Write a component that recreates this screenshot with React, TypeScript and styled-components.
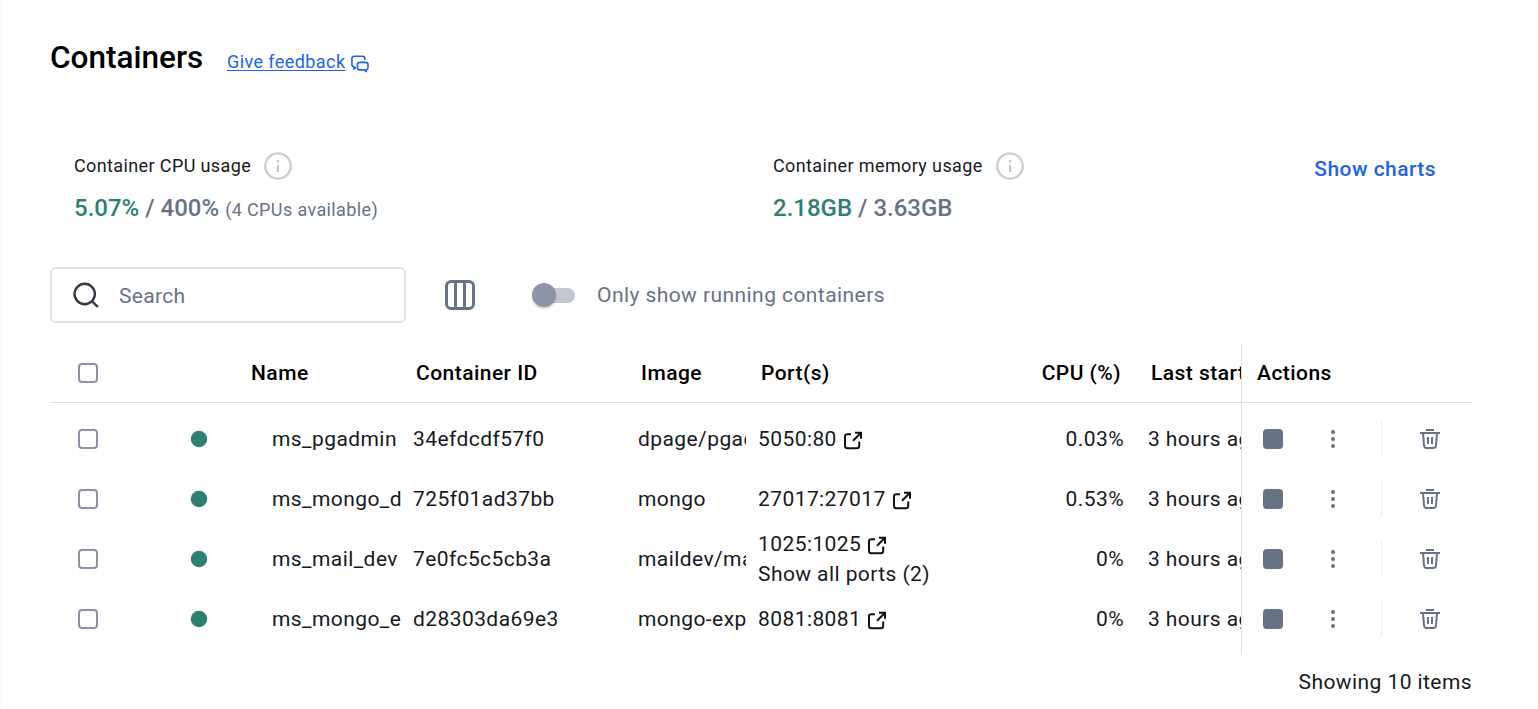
import React from "react";
import styled, { createGlobalStyle } from "styled-components";

const Global = createGlobalStyle`
  * { box-sizing: border-box; }
  body { margin: 0; background: #fff; font-family: Roboto, "Liberation Sans", sans-serif; color: #17191e; }
  svg { display: block; flex: none; }
`;

const Page = styled.main`
  height: 709px;
  border-left: 2px solid #f9f9fa;
  padding: 33px 66px 0 48px;
  overflow: hidden;
`;

const Header = styled.header`
  display: flex;
  align-items: center;
  height: 48px;
`;

const Title = styled.h1`
  margin: 0;
  padding-top: 2px;
  width: 177px;
  font-size: 31.5px;
  font-weight: 500;
  line-height: 48px;
  letter-spacing: 0;
  color: #000;
`;

const Feedback = styled.a`
  display: flex;
  align-items: center;
  gap: 6px;
  font-size: 18px;
  line-height: 27px;
  letter-spacing: 0.42px;
  color: #1d63ed;
  padding-top: 8px;

  span { text-decoration: underline; text-underline-offset: 2px; }
  svg { margin-top: 5px; }
`;

const Usage = styled.section`
  display: grid;
  grid-template-columns: 699px 1fr auto;
  margin-top: 70px;
  padding: 0 36px 0 24px;
  height: 116px;
`;

const UsageLabel = styled.div`
  display: flex;
  align-items: center;
  gap: 12px;
  height: 30px;
  font-size: 18px;
  letter-spacing: 0.38px;

  span { padding-bottom: 2px; }
`;

const UsageValue = styled.div`
  margin-top: 9px;
  font-size: 24px;
  font-weight: 500;
  line-height: 36px;
  letter-spacing: 0;
  color: #677285;
`;

const Used = styled.span`
  color: #2e7f74;
`;

const Note = styled.span`
  font-size: 18px;
  font-weight: 400;
  letter-spacing: 0.38px;
`;

const ChartsLink = styled.a`
  font-size: 21px;
  font-weight: 500;
  line-height: 36px;
  letter-spacing: 0.44px;
  color: #1d63ed;
`;

const Toolbar = styled.div`
  display: flex;
  align-items: center;
  height: 56px;
  color: #677285;
`;

const SearchBox = styled.div`
  display: flex;
  align-items: center;
  width: 356px;
  height: 56px;
  padding-left: 21px;
  gap: 20px;
  border: 2px solid #e1e2e6;
  border-radius: 6px;
  font-size: 21px;
  letter-spacing: 0.3px;

  span { padding-top: 2px; }
`;

const ColumnsButton = styled.div`
  margin: 0 57px 0 39px;
`;

const Switch = styled.div`
  display: flex;
  align-items: center;
  width: 43px;
  height: 24px;
  margin-right: 22px;
`;

const Track = styled.div`
  width: 31px;
  height: 15px;
  margin-left: 12px;
  border-radius: 8px;
  background: #c4c8d1;
`;

const Thumb = styled.div`
  flex: none;
  width: 24px;
  height: 24px;
  margin-right: -24px;
  border-radius: 50%;
  background: #8b93a7;
  box-shadow: 0 2px 2px rgba(0, 0, 0, 0.16);
  z-index: 1;
`;

const SwitchLabel = styled.span`
  font-size: 21px;
  letter-spacing: 0.43px;
`;

const Table = styled.div`
  display: grid;
  grid-template-columns: 1191px 231px;
  margin-top: 20px;
`;

const Pane = styled.div<{ $divided?: boolean }>`
  overflow: hidden;
  padding-bottom: 6px;
  border-left: ${(p) => (p.$divided ? "1px solid #dcdde0" : "0")};
`;

const HeadRow = styled.div`
  display: grid;
  grid-template-columns: 76px 122px 165px 225px 120px 278px 112px 200px;
  align-items: center;
  height: 60px;
  margin-bottom: 6px;
  border-bottom: 1px solid #dcdde0;
`;

const ActionHead = styled(HeadRow)`
  display: flex;
`;

const HeadCell = styled.div<{ $right?: boolean }>`
  padding-left: ${(p) => (p.$right ? "0" : "3px")};
  padding-right: ${(p) => (p.$right ? "27px" : "0")};
  text-align: ${(p) => (p.$right ? "right" : "left")};
  font-size: 21px;
  font-weight: 500;
  letter-spacing: 0.46px;
  white-space: nowrap;
  color: #000;
`;

const ActionTitle = styled(HeadCell)`
  padding-left: 15px;
`;

const Row = styled.div`
  display: grid;
  grid-template-columns: 76px 146px 141px 225px 120px 278px 112px 200px;
  align-items: center;
  height: 60px;
`;

const Center = styled.div`
  display: flex;
  justify-content: center;
`;

const Checkbox = styled.div`
  width: 20px;
  height: 20px;
  border: 2px solid #8b93a7;
  border-radius: 4px;
`;

const DotIcon = () => (
  <svg width="18" height="18" viewBox="0 0 18 18">
    <circle cx="9" cy="9" r="8.25" fill="#2e7f74" />
  </svg>
);

const Cell = styled.div<{ $clip?: number; $right?: boolean }>`
  width: ${(p) => (p.$clip ? `${p.$clip}px` : "auto")};
  overflow: hidden;
  padding-right: ${(p) => (p.$right ? "24px" : "0")};
  text-align: ${(p) => (p.$right ? "right" : "left")};
  font-size: 21px;
  line-height: 30px;
  letter-spacing: 0.42px;
  white-space: nowrap;
`;

const Port = styled.div`
  display: flex;
  align-items: center;
  gap: 6px;

  svg { margin-top: 2px; }
`;

const ActionRow = styled.div`
  display: flex;
  align-items: center;
  height: 60px;
  padding-left: 21px;
  color: #677285;
`;

const Stop = styled.div`
  width: 20px;
  height: 20px;
  border-radius: 4px;
  background: #677285;
`;

const More = styled.div`
  display: flex;
  flex-direction: column;
  gap: 3px;
  margin-left: 48px;

  i { width: 4px; height: 4px; border-radius: 50%; background: #677285; }
`;

const Separator = styled.div`
  width: 1px;
  height: 36px;
  margin: 0 38px 0 46px;
  background: #ededf0;
`;

const Footer = styled.footer`
  margin-top: 12px;
  text-align: right;
  font-size: 21px;
  line-height: 30px;
  letter-spacing: 0.42px;
`;

const InfoIcon = () => (
  <svg width="30" height="30" viewBox="0 0 30 30" fill="none">
    <circle cx="15" cy="15" r="12.7" stroke="#cccccc" strokeWidth="2.3" />
    <circle cx="15" cy="10" r="1.3" fill="#c4c4c4" />
    <path d="M15 14v7" stroke="#c4c4c4" strokeWidth="2" />
  </svg>
);

const FeedbackIcon = () => (
  <svg width="18" height="18" viewBox="0 0 18 18" fill="none" stroke="#1d63ed" strokeWidth="1.6" strokeLinejoin="round">
    <path d="M5 12.6H4.4L2.9 14V11.7C1.5 11.5 0.9 10.8 0.9 9.5V3.8C0.9 2.1 1.7 1.3 3.4 1.3H11.4C13.1 1.3 13.9 2.1 13.9 3.8V5" />
    <path d="M8.8 7.4H14.6C16.2 7.4 17 8.2 17 9.7V12.5C17 13.8 16.4 14.5 15.2 14.7V16.6L13.4 14.9H8.8C7.2 14.9 6.4 14.1 6.4 12.5V9.7C6.4 8.2 7.2 7.4 8.8 7.4Z" />
  </svg>
);

const SearchIcon = () => (
  <svg width="26" height="26" viewBox="0 0 26 26" fill="none" stroke="#363c47" strokeWidth="2.4" strokeLinecap="round">
    <circle cx="11.7" cy="12" r="10.2" />
    <path d="M19.3 19.6L24.3 24.3" />
  </svg>
);

const ColumnsIcon = () => (
  <svg width="30" height="30" viewBox="0 0 30 30" fill="none" stroke="#677285" strokeWidth="3">
    <rect x="1.5" y="1.5" width="27" height="27" rx="4.5" />
    <path d="M10.5 2V28M19.5 2V28" />
  </svg>
);

const ExternalIcon = () => (
  <svg width="20" height="20" viewBox="0 0 20 20" fill="none" stroke="#111" strokeWidth="2">
    <path d="M8 4.2H4.5C2.7 4.2 2 4.9 2 6.7V15.7C2 17.5 2.8 18.2 4.5 18.2H13.7C15.5 18.2 16.2 17.5 16.2 15.7V11.5" />
    <path d="M12 2.7H18V8.7M18 2.7L10 10.7" />
  </svg>
);

const TrashIcon = () => (
  <svg width="20" height="20" viewBox="0 0 20 20" fill="none" stroke="#677285" strokeWidth="2">
    <path d="M6 1H14M0 4H20M3 4L4 16.5C4.2 18.3 4.9 19 6.5 19H13.5C15.1 19 15.8 18.3 16 16.5L17 4M8 8V15M12 8V15" />
  </svg>
);

interface Container {
  name: string;
  id: string;
  image: string;
  port: string;
  more?: string;
  cpu: string;
}

const containers: Container[] = [
  { name: "ms_pgadmin", id: "34efdcdf57f0", image: "dpage/pgadmin4", port: "5050:80", cpu: "0.03%" },
  { name: "ms_mongo_db", id: "725f01ad37bb", image: "mongo", port: "27017:27017", cpu: "0.53%" },
  { name: "ms_mail_dev", id: "7e0fc5c5cb3a", image: "maildev/maildev", port: "1025:1025", more: "Show all ports (2)", cpu: "0%" },
  { name: "ms_mongo_express", id: "d28303da69e3", image: "mongo-express", port: "8081:8081", cpu: "0%" },
];

export default function App() {
  return (
    <>
      <Global />
      <Page>
        <Header>
          <Title>Containers</Title>
          <Feedback>
            <span>Give feedback</span>
            <FeedbackIcon />
          </Feedback>
        </Header>

        <Usage>
          <div>
            <UsageLabel><span>Container CPU usage</span><InfoIcon /></UsageLabel>
            <UsageValue><Used>5.07%</Used> / 400% <Note>(4 CPUs available)</Note></UsageValue>
          </div>
          <div>
            <UsageLabel><span>Container memory usage</span><InfoIcon /></UsageLabel>
            <UsageValue><Used>2.18GB</Used> / 3.63GB</UsageValue>
          </div>
          <ChartsLink>Show charts</ChartsLink>
        </Usage>

        <Toolbar>
          <SearchBox><SearchIcon /><span>Search</span></SearchBox>
          <ColumnsButton><ColumnsIcon /></ColumnsButton>
          <Switch><Thumb /><Track /></Switch>
          <SwitchLabel>Only show running containers</SwitchLabel>
        </Toolbar>

        <Table>
          <Pane>
            <HeadRow>
              <Center><Checkbox /></Center>
              <span />
              <HeadCell>Name</HeadCell>
              <HeadCell>Container ID</HeadCell>
              <HeadCell>Image</HeadCell>
              <HeadCell>Port(s)</HeadCell>
              <HeadCell $right>CPU (%)</HeadCell>
              <HeadCell>Last started</HeadCell>
            </HeadRow>
            {containers.map((c) => (
              <Row key={c.id}>
                <Center><Checkbox /></Center>
                <Center><DotIcon /></Center>
                <Cell $clip={130}>{c.name}</Cell>
                <Cell>{c.id}</Cell>
                <Cell $clip={108}>{c.image}</Cell>
                <Cell>
                  <Port>{c.port}<ExternalIcon /></Port>
                  {c.more}
                </Cell>
                <Cell $right>{c.cpu}</Cell>
                <Cell>3 hours ago</Cell>
              </Row>
            ))}
          </Pane>
          <Pane $divided>
            <ActionHead><ActionTitle>Actions</ActionTitle></ActionHead>
            {containers.map((c) => (
              <ActionRow key={c.id}>
                <Stop />
                <More><i /><i /><i /></More>
                <Separator />
                <TrashIcon />
              </ActionRow>
            ))}
          </Pane>
        </Table>
        <Footer>Showing 10 items</Footer>
      </Page>
    </>
  );
}
